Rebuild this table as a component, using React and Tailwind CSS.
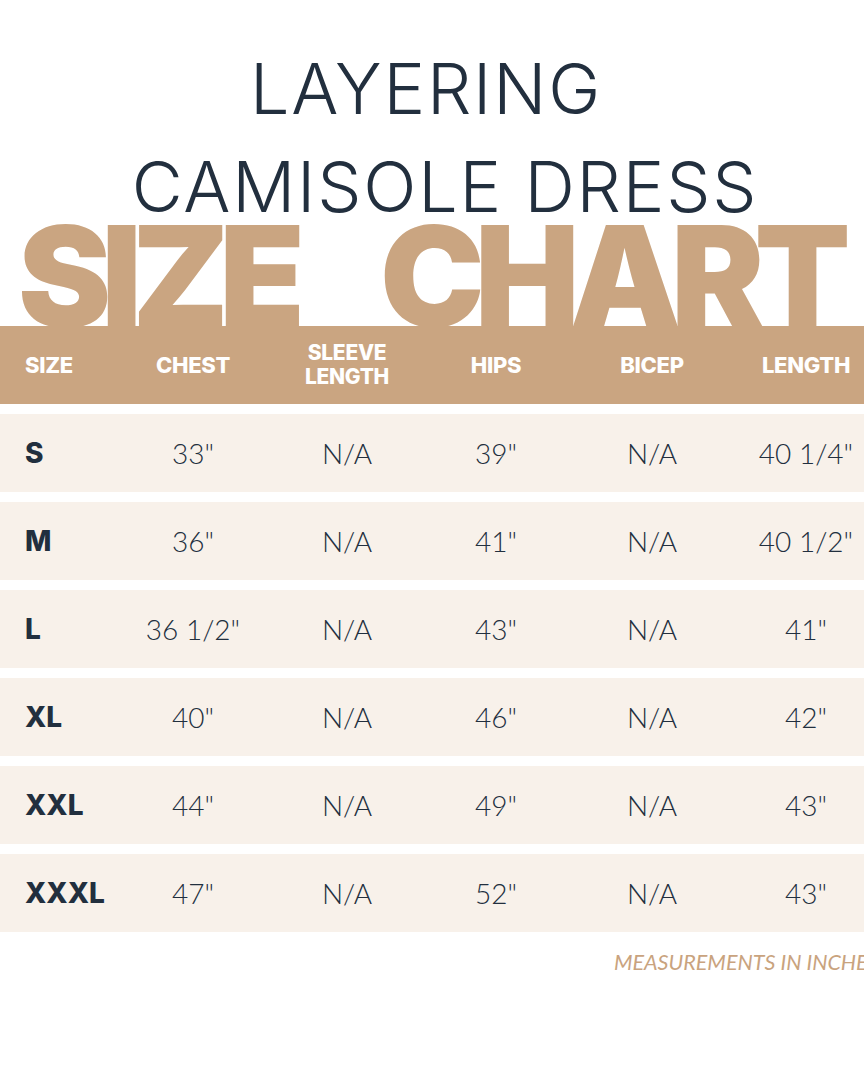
import React from 'react'

const rows = [
  ['S', '33"', 'N/A', '39"', 'N/A', '40 1/4"'],
  ['M', '36"', 'N/A', '41"', 'N/A', '40 1/2"'],
  ['L', '36 1/2"', 'N/A', '43"', 'N/A', '41"'],
  ['XL', '40"', 'N/A', '46"', 'N/A', '42"'],
  ['XXL', '44"', 'N/A', '49"', 'N/A', '43"'],
  ['XXXL', '47"', 'N/A', '52"', 'N/A', '43"'],
]

const cols = 'grid grid-cols-[116px_154px_154px_144px_168px_140px] w-[876px] items-center'

const App = () => {
  return (
    <div className="w-[864px] h-[1080px] bg-white overflow-hidden flex flex-col">
      {/* title */}
      <h1 className="pt-[40px] text-center text-[#222f3e] text-[70px] leading-[98px] font-light tracking-[1.8px] font-['Inter',sans-serif]">
        <div className="pr-[12px]">LAYERING</div>
        <div className="pl-[26px]">CAMISOLE DRESS</div>
      </h1>
      <div className="mt-[-10px] h-[100px] leading-[100px] text-[140px] font-black text-[#caa581] tracking-[-10px] whitespace-nowrap pl-[18px] flex gap-[85px] font-['Inter',sans-serif]">
        <span>SIZE</span>
        <span>CHART</span>
      </div>

      {/* header */}
      <div className="relative z-10 h-[78px] bg-[#caa581] overflow-hidden">
        <div className={`${cols} h-full text-white font-extrabold text-[22px] leading-[24px] font-['Inter',sans-serif] tracking-[-0.3px]`}>
          <div className="pl-[25px]">SIZE</div>
          <div className="text-center">CHEST</div>
          <div className="text-center text-[21px] leading-[24px]">SLEEVE<br />LENGTH</div>
          <div className="text-center">HIPS</div>
          <div className="text-center">BICEP</div>
          <div className="text-center">LENGTH</div>
        </div>
      </div>

      {/* rows */}
      <div className="flex flex-col gap-[10px] mt-[10px]">
        {rows.map((r, i) => (
          <div key={i} className="h-[78px] bg-[#f8f1ea] overflow-hidden">
            <div className={`${cols} h-full text-[#222f3e]`}>
              <div className="pl-[25px] text-[28px] font-extrabold font-['Inter',sans-serif]">{r[0]}</div>
              {r.slice(1).map((c, j) => (
                <div key={j} className="text-center text-[28px] font-['Lato',sans-serif] font-light">{c}</div>
              ))}
            </div>
          </div>
        ))}
      </div>

      {/* footer */}
      <div className="mt-[14px] pl-[614px] whitespace-nowrap italic font-normal text-[21.5px] text-[#c9a37e] font-['Lato',sans-serif]">
        MEASUREMENTS IN INCHES
      </div>
    </div>
  )
}

export default App
